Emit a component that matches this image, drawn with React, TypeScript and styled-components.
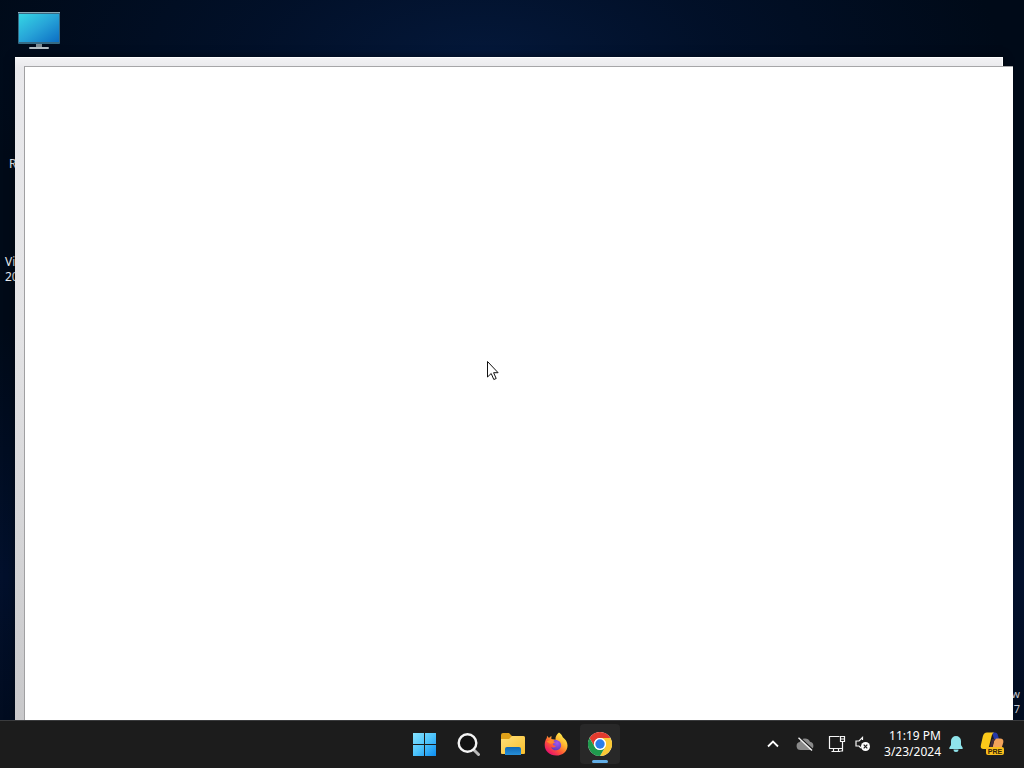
import React from "react";
import styled, { createGlobalStyle } from "styled-components";

const GlobalStyle = createGlobalStyle`
  * { box-sizing: border-box; }
  body { margin: 0; font-family: "Noto Sans", "Open Sans", sans-serif; font-size: 12px; color: #fff; }
`;

const Screen = styled.div`
  display: flex;
  flex-direction: column;
  height: 100vh;
  overflow: hidden;
  background: #000a18;
`;

const Desktop = styled.main`
  position: relative;
  flex: 1;
  overflow: hidden;
  background:
    radial-gradient(ellipse 520px 240px at 47% 60px, #04183a 0%, rgba(2, 18, 46, 0.75) 45%, rgba(0, 10, 24, 0) 100%),
    linear-gradient(180deg, #000a18 0%, #000a18 45%, #02102c 80%, #010c20 100%);
`;

const Shortcut = styled.button<{ $x: number; $y: number }>`
  position: absolute;
  left: ${(p) => p.$x}px;
  top: ${(p) => p.$y}px;
  padding: 0;
  border: 0;
  background: none;
  color: #eceff4;
  font: inherit;
  line-height: 15px;
  text-align: left;
  white-space: pre-line;
`;

const Watermark = styled.div`
  position: absolute;
  right: 4px;
  bottom: 4px;
  color: #c3c7cd;
  font-size: 11px;
  line-height: 15px;
  text-align: right;
`;

const BackWindow = styled.section`
  position: absolute;
  top: 57px;
  left: 15px;
  right: 21px;
  bottom: 0;
  background: linear-gradient(180deg, #f2f2f4 0, #e9e9ec 10px, #e4e4e6 40%, #c8c8ca 100%);
  border-top: 1px solid #fff;
  border-right: 1px solid #fff;
  box-shadow: 0 0 8px rgba(0, 0, 0, 0.5);
`;

const FrontWindow = styled.section`
  position: absolute;
  top: 66px;
  left: 24px;
  right: 11px;
  bottom: 0;
  background: #fff;
  border-top: 1px solid #a6a6a8;
  border-left: 1px solid #a0a0a2;
`;

const Pointer = styled.svg`
  position: absolute;
  left: 487px;
  top: 360px;
`;

const Taskbar = styled.footer`
  display: grid;
  grid-template-columns: 1fr auto 1fr;
  align-items: center;
  height: 48px;
  padding-bottom: 2px;
  background: #1c1c1c;
  border-top: 1px solid #3a3b3d;
`;

const Apps = styled.nav`
  grid-column: 2;
  display: flex;
  gap: 4px;
`;

const AppButton = styled.button<{ $active?: boolean }>`
  position: relative;
  display: grid;
  place-items: center;
  width: 40px;
  height: 40px;
  padding: 0;
  border: 0;
  border-radius: 4px;
  background: ${(p) => (p.$active ? "#282828" : "transparent")};
`;

const ActiveMark = styled.span`
  position: absolute;
  bottom: 1px;
  left: 12px;
  width: 16px;
  height: 3px;
  border-radius: 2px;
  background: #62aee6;
`;

const Tray = styled.div`
  display: flex;
  align-items: center;
  justify-content: flex-end;
  padding-right: 6px;
`;

const TrayButton = styled.button<{ $w: number }>`
  display: grid;
  place-items: center;
  width: ${(p) => p.$w}px;
  height: 40px;
  padding: 0;
  border: 0;
  background: none;
`;

const Clock = styled.button`
  padding: 0;
  margin: 0 5px 0 11px;
  border: 0;
  background: none;
  color: #fff;
  font: inherit;
  line-height: 16px;
  text-align: right;
`;

const Line = styled.span`
  display: block;
`;

const MonitorIcon = () => (
  <svg width="42" height="39" viewBox="0 0 42 39" aria-hidden="true">
    <defs>
      <linearGradient id="pc" x1="0" y1="0" x2="1" y2="1">
        <stop offset="0" stopColor="#35d6e4" />
        <stop offset="0.5" stopColor="#27a4d8" />
        <stop offset="1" stopColor="#0c6ec4" />
      </linearGradient>
    </defs>
    <rect y="1" width="42" height="32" rx="1" fill="#356a84" />
    <rect y="1" width="42" height="1" fill="#8aa8b6" />
    <rect x="1" y="3" width="40" height="28" fill="url(#pc)" />
    <rect x="18" y="33" width="6" height="3" fill="#7e8c94" />
    <rect x="11" y="36" width="20" height="2" rx="1" fill="#b3bec4" />
  </svg>
);

const StartIcon = () => (
  <svg width="24" height="24" viewBox="0 0 24 24" aria-hidden="true">
    <defs>
      <linearGradient id="win" gradientUnits="userSpaceOnUse" x1="0" y1="0" x2="24" y2="24">
        <stop offset="0" stopColor="#8ae6ff" />
        <stop offset="0.5" stopColor="#50c5fb" />
        <stop offset="1" stopColor="#0b8cf0" />
      </linearGradient>
    </defs>
    <path fill="url(#win)" d="M1 1h11v11H1zM13 1h11v11H13zM1 13h11v11H1zM13 13h11v11H13z" />
  </svg>
);

const SearchIcon = () => (
  <svg width="24" height="24" viewBox="0 0 24 24" fill="none" aria-hidden="true">
    <path d="M17.5 17.5 22.5 22.5" stroke="#b9b9b9" strokeWidth="3" strokeLinecap="round" />
    <circle cx="11.5" cy="11" r="8.8" fill="#111" stroke="#f4f4f4" strokeWidth="2.4" />
  </svg>
);

const FolderIcon = () => (
  <svg width="26" height="24" viewBox="0 0 26 24" aria-hidden="true">
    <defs>
      <linearGradient id="fold" x1="0" y1="0" x2="1" y2="1">
        <stop offset="0" stopColor="#ffe07a" />
        <stop offset="1" stopColor="#f9bf2c" />
      </linearGradient>
      <linearGradient id="foldBlue" x1="0" y1="0" x2="0" y2="1">
        <stop offset="0" stopColor="#1068b4" />
        <stop offset="1" stopColor="#2790d9" />
      </linearGradient>
    </defs>
    <path d="M2 3q0-2 2-2h6l3 3h11q2 0 2 2v5H2z" fill="#dfa019" />
    <path d="M2 7h8l3-3h11q2 0 2 2v15q0 1-1 1H3q-1 0-1-1z" fill="url(#fold)" />
    <path d="M6 23v-6q0-2 2-2h12q2 0 2 2v6z" fill="url(#foldBlue)" />
  </svg>
);

const FirefoxIcon = () => (
  <svg width="24" height="24" viewBox="0 0 24 24" aria-hidden="true">
    <defs>
      <linearGradient id="fox" x1="0.85" y1="0.1" x2="0.2" y2="0.9">
        <stop offset="0" stopColor="#fff04f" />
        <stop offset="0.35" stopColor="#ffb22e" />
        <stop offset="0.65" stopColor="#ff5a35" />
        <stop offset="1" stopColor="#e8146b" />
      </linearGradient>
      <radialGradient id="globe" cx="0.6" cy="0.3" r="0.8">
        <stop offset="0" stopColor="#a158ee" />
        <stop offset="1" stopColor="#5538b7" />
      </radialGradient>
    </defs>
    <path
      d="M15 .5c1.8 1.2 3 2.8 3.8 4.7 2.8 2 4.6 4.9 4.7 8.2.1 5.6-4.7 10.1-11.3 10.1C5.600 23.500.700 19 .7 13c0-3 .9-5.500 2.100-7L3 3.800 5 6c.800-.9 1.600-1.600 2.500-1.900L7.300 7l4.200.7C11.300 4.700 12.500 2.300 15 .5z"
      fill="url(#fox)"
    />
    <path d="M8 9.500c2-2.200 5.500-2.100 7.600.1 2.300 2.400 1.900 6-.4 7.700-2.700 2-7.200.8-8.200-2.400 1.700 1 3.500.8 5-.9-2-.1-3.300-.7-3.100-1.900.3-.8 1.400-.7 2.300-1.300-.7-.8-1.900-1.200-3.200-1.300z" fill="url(#globe)" />
    <path d="M2.500 9.500 6.500 8l4 .6-2 2.600-2.400.6z" fill="#ff8a2a" />
  </svg>
);

const ChromeIcon = () => (
  <svg width="24" height="24" viewBox="0 0 24 24" aria-hidden="true">
    <circle cx="12" cy="12" r="12" fill="#fff" />
    <path d="M12 0a12 12 0 0 1 10.400 6H12a6 6 0 0 0-5.200 9L1.600 6A12 12 0 0 1 12 0z" fill="#e33b2e" />
    <path d="M22.400 6A12 12 0 0 1 12 24l5.200-9A6 6 0 0 0 12 6z" fill="#fcc934" />
    <path d="M1.600 6 6.800 15a6 6 0 0 0 10.400 0L12 24A12 12 0 0 1 1.600 6z" fill="#1f9a4d" />
    <circle cx="12" cy="12" r="6" fill="#fff" />
    <circle cx="12" cy="12" r="4.700" fill="#2a7de9" />
  </svg>
);

const ChevronIcon = () => (
  <svg width="12" height="8" viewBox="0 0 12 8" fill="none" stroke="#fff" strokeWidth="1.800" aria-hidden="true">
    <path d="M1 6.500 6 1.500l5 5" />
  </svg>
);

const CloudIcon = () => (
  <svg width="18" height="16" viewBox="0 0 18 16" aria-hidden="true">
    <path d="M4.500 14a4 4 0 0 1-.8-7.900A5.600 5.600 0 0 1 14 5.800a4.200 4.200 0 0 1 .2 8.200z" fill="#8a8a8a" />
    <path d="M3.200 1 17 13.500" stroke="#1c1c1c" strokeWidth="1.200" />
    <path d="M2.500 1.800 16 14.500" stroke="#f2f2f2" strokeWidth="1.400" />
  </svg>
);

const NetworkIcon = () => (
  <svg width="18" height="18" viewBox="0 0 18 18" fill="none" stroke="#f5f5f5" strokeWidth="1.200" aria-hidden="true">
    <path d="M11.500 1.500h-10v12h12.500M5.500 13.500v3M10.500 13.500v3M3.500 16.500h9" />
    <path d="M12.500 1.500h4v5h-4zM12.500 4h4M14.500 6.500v9.500h-2" />
  </svg>
);

const VolumeIcon = () => (
  <svg width="18" height="18" viewBox="0 0 18 18" fill="none" aria-hidden="true">
    <path d="M8.500 5V2.500L5 6H2v5h3l2 2" stroke="#f5f5f5" strokeWidth="1.200" />
    <circle cx="11.500" cy="11.500" r="4.500" fill="#fff" />
    <path d="m9.700 9.700 3.600 3.600m0-3.600-3.600 3.600" stroke="#1c1c1c" strokeWidth="1.200" />
  </svg>
);

const BellIcon = () => (
  <svg width="16" height="18" viewBox="0 0 16 18" fill="#8fe3ea" aria-hidden="true">
    <path d="M8 1a5 5 0 0 1 5 5v4l1.800 3q.2 1-.8 1H2q-1 0-.8-1L3 10V6a5 5 0 0 1 5-5z" />
    <path d="M5.500 14.500h5a2.500 2.500 0 0 1-5 0z" />
  </svg>
);

const CopilotIcon = () => (
  <svg width="26" height="24" viewBox="0 0 26 24" aria-hidden="true">
    <path d="M13 .500h3q2 0 2.700 2L20 7h-5z" fill="#2539a8" />
    <path d="M8 .500h7q-1.500.5-2.200 3L10 14.500q-.7 2.500-3 2.500H4.500q-3.500 0-2.600-4L3.800 4.500Q4.800.500 8 .500z" fill="#fbc91a" />
    <path d="M17.500 6.500H21q4 0 3.300 4L22 18h-9l2-8.500q.7-3 2.500-3z" fill="#f3a35b" />
    <path d="m10.500 16 2.500-9h4q-1.800.4-2.300 3L13 16z" fill="#442b38" />
    <rect x="7" y="15" width="18" height="8" rx="2" fill="#f9bd1b" />
    <text x="16" y="21.500" textAnchor="middle" fontSize="7" fontWeight="700" fontFamily="Liberation Sans, sans-serif" fill="#30240a">PRE</text>
  </svg>
);

export default function App() {
  return (
    <>
      <GlobalStyle />
      <Screen>
        <Desktop>
          <Shortcut $x={18} $y={11} aria-label="This PC"><MonitorIcon /></Shortcut>
          <Shortcut $x={9} $y={156}>R</Shortcut>
          <Shortcut $x={5} $y={254}>{"Vi\n20"}</Shortcut>
          <Watermark>
            <Line>w</Line>
            <Line>7</Line>
          </Watermark>
          <BackWindow />
          <FrontWindow />
          <Pointer width="13" height="21" viewBox="0 0 13 21" aria-hidden="true">
            <path d="M.5 1.500v15.500l3.700-3.500 2.600 6 2.400-1-2.600-5.800h4.500z" fill="#fff" stroke="#111" />
          </Pointer>
        </Desktop>
        <Taskbar>
          <Apps aria-label="Apps">
            <AppButton aria-label="Start"><StartIcon /></AppButton>
            <AppButton aria-label="Search"><SearchIcon /></AppButton>
            <AppButton aria-label="File Explorer"><FolderIcon /></AppButton>
            <AppButton aria-label="Firefox"><FirefoxIcon /></AppButton>
            <AppButton $active aria-label="Chrome"><ChromeIcon /><ActiveMark /></AppButton>
          </Apps>
          <Tray>
            <TrayButton $w={32} aria-label="Show hidden icons"><ChevronIcon /></TrayButton>
            <TrayButton $w={32} aria-label="OneDrive"><CloudIcon /></TrayButton>
            <TrayButton $w={32} aria-label="Network"><NetworkIcon /></TrayButton>
            <TrayButton $w={20} aria-label="Volume"><VolumeIcon /></TrayButton>
            <Clock>
              <Line>11:19 PM</Line>
              <Line>3/23/2024</Line>
            </Clock>
            <TrayButton $w={20} aria-label="Notifications"><BellIcon /></TrayButton>
            <TrayButton $w={52} aria-label="Copilot"><CopilotIcon /></TrayButton>
          </Tray>
        </Taskbar>
      </Screen>
    </>
  );
}
